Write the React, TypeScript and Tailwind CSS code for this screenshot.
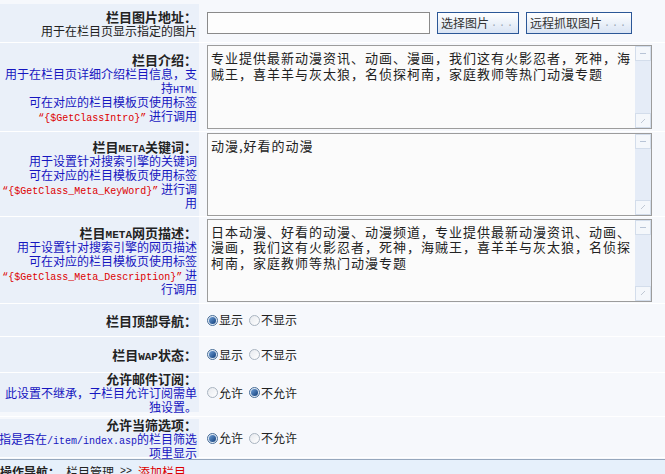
import type { ReactNode } from 'react'

const CJK = "font-['Noto_Sans_CJK_SC','Liberation_Sans',sans-serif]"
const MONO = "font-['Liberation_Mono',monospace] text-[10px] leading-[14px] align-baseline"

function Red({ children }: { children: ReactNode }) {
  return <span className={`${MONO} text-[#dd0000]`}>{children}</span>
}

function Asc({ children }: { children: ReactNode }) {
  return <span className={MONO}>{children}</span>
}

function Title({ children }: { children: ReactNode }) {
  return <div className="h-[15px] whitespace-nowrap text-[13px] font-bold leading-[15px] text-[#222]">{children}</div>
}

function Desc({ children }: { children: ReactNode }) {
  return <div className="h-[14px] whitespace-nowrap text-[12px] leading-[14px] text-[#1616c0]">{children}</div>
}

function Row({ h, label, children }: { h: string; label: ReactNode; children: ReactNode }) {
  return (
    <div className={`flex border-b border-white ${h}`}>
      <div className="flex w-[199px] shrink-0 flex-col items-end justify-center bg-[#eaf0f9] pr-[2px] text-right">
        {label}
      </div>
      <div className="flex flex-1 items-center bg-[#f6f8fc] pl-[8px]">{children}</div>
    </div>
  )
}

function FakeTextarea({ lines, h }: { lines: string[]; h: string }) {
  return (
    <div className={`flex w-[445px] border border-[#9c9c9c] bg-[#fbfbfb] ${h}`}>
      <div className="flex-1 pl-[3px] pt-[4px] text-[13px] leading-[15.5px] tracking-[1px] text-[#222]">
        {lines.map((l) => (
          <div key={l} className="whitespace-nowrap">{l}</div>
        ))}
      </div>
      <div className="flex w-[16px] flex-col justify-between bg-[#e5ecf7]">
        <div className="flex h-[15px] items-center justify-center border border-[#d3ddeb] bg-[#f4f7fb]">
          <span className="h-px w-[6px] bg-[#b8c4d6]" />
        </div>
        <div className="flex h-[15px] items-center justify-center border border-[#d3ddeb] bg-[#f4f7fb]">
          <svg width="6" height="6" viewBox="0 0 6 6">
            <path d="M1 5 L5 1" stroke="#c0c8d4" strokeWidth="1" />
          </svg>
        </div>
      </div>
    </div>
  )
}

function Radio({ checked, label }: { checked: boolean; label: string }) {
  return (
    <span className="flex items-center">
      <span
        className={`flex h-[11px] w-[11px] items-center justify-center rounded-full border ${
          checked ? 'border-[#4a6f98] bg-[#dfe9f5]' : 'border-[#a9b4c0] bg-gradient-to-br from-[#e6e9ee] to-white'
        }`}
      >
        {checked && <span className="h-[7px] w-[7px] rounded-full bg-gradient-to-br from-[#6fa0d8] to-[#0f3e7a]" />}
      </span>
      <span className="ml-[1px] text-[12px] leading-[14px] text-[#222]">{label}</span>
    </span>
  )
}

function Radios({ first, second, checkedFirst }: { first: string; second: string; checkedFirst: boolean }) {
  return (
    <div className="flex items-center gap-[6px]">
      <Radio checked={checkedFirst} label={first} />
      <Radio checked={!checkedFirst} label={second} />
    </div>
  )
}

function Btn({ text }: { text: string }) {
  return (
    <button
      type="button"
      className="flex h-[22px] items-center border border-[#2b5797] bg-gradient-to-b from-white to-[#d9e4f4] px-[3px] text-[12px] text-[#333]"
    >
      {text}
      <span className="ml-[2px] font-['Liberation_Mono',monospace] text-[10px] tracking-[2px] text-[#9aa6b6]">...</span>
    </button>
  )
}

export default function App() {
  return (
    <div className={`${CJK} h-[474px] w-[665px] overflow-hidden bg-[#f6f8fc]`}>
      <Row
        h="h-[43px] pt-[4px]"
        label={
          <>
            <Title>栏目图片地址：</Title>
            <div className="h-[14px] whitespace-nowrap text-[12px] leading-[14px] text-[#222]">用于在栏目页显示指定的图片</div>
          </>
        }
      >
        <div className="flex items-center gap-[7px]">
          <div className="h-[22px] w-[223px] border border-[#8a8a8a] bg-[#fdfdfd]" />
          <Btn text="选择图片" />
          <Btn text="远程抓取图片" />
        </div>
      </Row>

      <Row
        h="h-[89px]"
        label={
          <>
            <Title>栏目介绍：</Title>
            <Desc>用于在栏目页详细介绍栏目信息，支</Desc>
            <Desc>
              持<Asc>HTML</Asc>
            </Desc>
            <Desc>可在对应的栏目模板页使用标签</Desc>
            <Desc>
              <Red>“{'{$GetClassIntro}'}”</Red> 进行调用
            </Desc>
          </>
        }
      >
        <FakeTextarea
          h="h-[84px]"
          lines={['专业提供最新动漫资讯、动画、漫画，我们这有火影忍者，死神，海', '贼王，喜羊羊与灰太狼，名侦探柯南，家庭教师等热门动漫专题']}
        />
      </Row>

      <Row
        h="h-[85px]"
        label={
          <>
            <Title>
              栏目<span className="font-['Liberation_Mono',monospace] text-[11px] leading-[15px]">META</span>关键词：
            </Title>
            <Desc>用于设置针对搜索引擎的关键词</Desc>
            <Desc>可在对应的栏目模板页使用标签</Desc>
            <Desc>
              <Red>“{'{$GetClass_Meta_KeyWord}'}”</Red> 进行调
            </Desc>
            <Desc>用</Desc>
          </>
        }
      >
        <FakeTextarea h="h-[83px]" lines={['动漫,好看的动漫']} />
      </Row>

      <Row
        h="h-[87px]"
        label={
          <>
            <Title>
              栏目<span className="font-['Liberation_Mono',monospace] text-[11px] leading-[15px]">META</span>网页描述：
            </Title>
            <Desc>用于设置针对搜索引擎的网页描述</Desc>
            <Desc>可在对应的栏目模板页使用标签</Desc>
            <Desc>
              <Red>“{'{$GetClass_Meta_Description}'}”</Red> 进
            </Desc>
            <Desc>行调用</Desc>
          </>
        }
      >
        <FakeTextarea
          h="h-[83px]"
          lines={[
            '日本动漫、好看的动漫、动漫频道，专业提供最新动漫资讯、动画、',
            '漫画，我们这有火影忍者，死神，海贼王，喜羊羊与灰太狼，名侦探',
            '柯南，家庭教师等热门动漫专题',
          ]}
        />
      </Row>

      <Row h="h-[33px]" label={<Title>栏目顶部导航：</Title>}>
        <Radios first="显示" second="不显示" checkedFirst />
      </Row>

      <Row
        h="h-[36px]"
        label={
          <Title>
            栏目<span className="font-['Liberation_Mono',monospace] text-[11px] leading-[15px]">WAP</span>状态：
          </Title>
        }
      >
        <Radios first="显示" second="不显示" checkedFirst />
      </Row>

      <Row
        h="h-[44px] pb-[4px]"
        label={
          <>
            <Title>允许邮件订阅：</Title>
            <Desc>此设置不继承，子栏目允许订阅需单</Desc>
            <Desc>独设置。</Desc>
          </>
        }
      >
        <Radios first="允许" second="不允许" checkedFirst={false} />
      </Row>

      <Row
        h="h-[41px] pt-[2px]"
        label={
          <>
            <Title>允许当筛选项：</Title>
            <Desc>
              指是否在<Asc>/item/index.asp</Asc>的栏目筛选
            </Desc>
            <Desc>项里显示</Desc>
          </>
        }
      >
        <Radios first="允许" second="不允许" checkedFirst />
      </Row>

      <div className="mt-[1px] flex h-[20px] items-center border-t border-[#95a7bd] bg-[#e6f0fb] pt-[4px] text-[12px] text-[#222]">
        <span className="font-bold">操作导航：</span>
        <span className="ml-[6px]">栏目管理</span>
        <span className="mx-[6px] font-['Liberation_Mono',monospace] text-[10px]">&gt;&gt;</span>
        <span className="text-[#dd0000]">添加栏目</span>
      </div>
    </div>
  )
}
